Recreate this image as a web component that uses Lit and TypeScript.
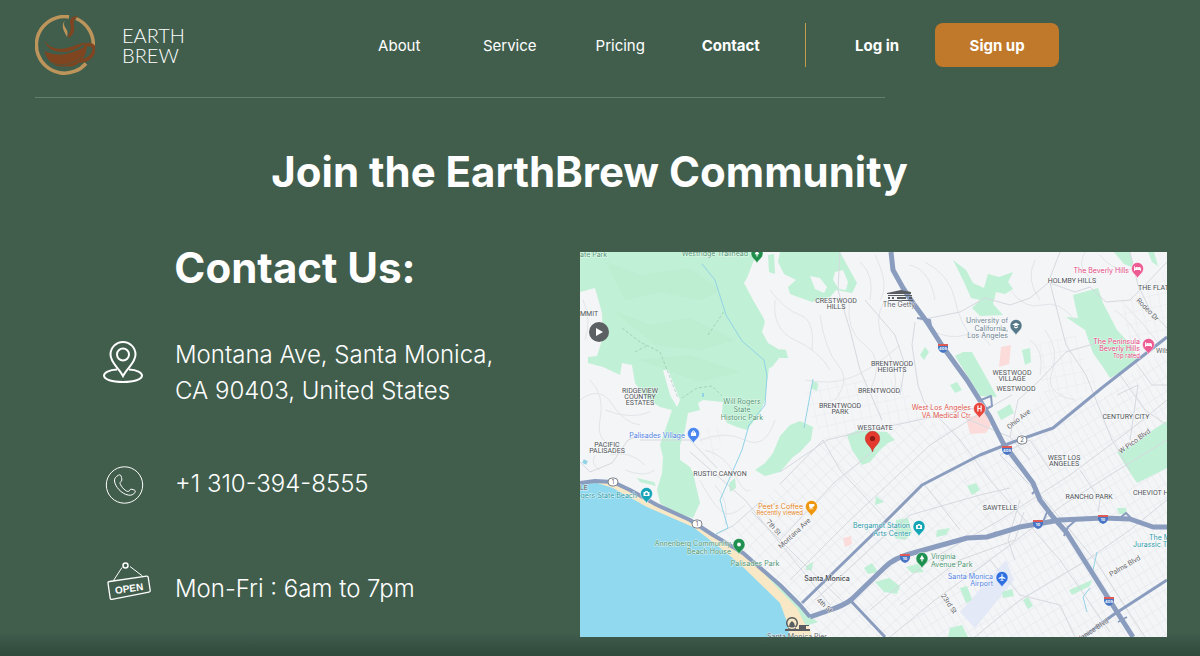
import { LitElement, html, svg, css } from "lit";
import { customElement } from "lit/decorators.js";

type Label = { x: number; y: number; t: string; k: string; r?: number };

const LABELS: Label[] = [
  { x: 580, y: 257, t: "ate Park", k: "park start" },
  { x: 748, y: 256, t: "Westridge Trailhead", k: "park end" },
  { x: 580, y: 316, t: "MMIT", k: "area start" },
  { x: 640, y: 393, t: "RIDGEVIEW", k: "area" },
  { x: 640, y: 399, t: "COUNTRY", k: "area" },
  { x: 640, y: 405, t: "ESTATES", k: "area" },
  { x: 742, y: 404, t: "Will Rogers", k: "park" },
  { x: 742, y: 412, t: "State", k: "park" },
  { x: 742, y: 420, t: "Historic Park", k: "park" },
  { x: 685, y: 438, t: "Palisades Village", k: "shop end" },
  { x: 607, y: 447, t: "PACIFIC", k: "area" },
  { x: 607, y: 453, t: "PALISADES", k: "area" },
  { x: 836, y: 303, t: "CRESTWOOD", k: "area" },
  { x: 836, y: 309, t: "HILLS", k: "area" },
  { x: 899, y: 307, t: "The Getty", k: "poi" },
  { x: 892, y: 366, t: "BRENTWOOD", k: "area" },
  { x: 892, y: 372, t: "HEIGHTS", k: "area" },
  { x: 879, y: 393, t: "BRENTWOOD", k: "area" },
  { x: 840, y: 408, t: "BRENTWOOD", k: "area" },
  { x: 840, y: 414, t: "PARK", k: "area" },
  { x: 875, y: 430, t: "WESTGATE", k: "area" },
  { x: 971, y: 410, t: "West Los Angeles", k: "med end" },
  { x: 971, y: 418, t: "VA Medical Ctr", k: "med end" },
  { x: 1008, y: 323, t: "University of", k: "school end" },
  { x: 1008, y: 331, t: "California,", k: "school end" },
  { x: 1008, y: 338, t: "Los Angeles", k: "school end" },
  { x: 1129, y: 273, t: "The Beverly Hills", k: "hotel end" },
  { x: 1072, y: 283, t: "HOLMBY HILLS", k: "area" },
  { x: 1138, y: 290, t: "THE FLATS", k: "area start" },
  { x: 1140, y: 344, t: "The Peninsula", k: "hotel end" },
  { x: 1140, y: 351, t: "Beverly Hills", k: "hotel end" },
  { x: 1140, y: 358, t: "Top rated", k: "hotel end small" },
  { x: 1156, y: 353, t: "Wilshire", k: "road start" },
  { x: 1012, y: 375, t: "WESTWOOD", k: "area" },
  { x: 1012, y: 381, t: "VILLAGE", k: "area" },
  { x: 1016, y: 391, t: "WESTWOOD", k: "area" },
  { x: 1126, y: 419, t: "CENTURY CITY", k: "area" },
  { x: 1064, y: 460, t: "WEST LOS", k: "area" },
  { x: 1064, y: 466, t: "ANGELES", k: "area" },
  { x: 1089, y: 499, t: "RANCHO PARK", k: "area" },
  { x: 1133, y: 495, t: "CHEVIOT HILLS", k: "area start" },
  { x: 1000, y: 510, t: "SAWTELLE", k: "area" },
  { x: 1149, y: 540, t: "The Museum of", k: "arts start" },
  { x: 1133, y: 547, t: "Jurassic Technology", k: "arts start" },
  { x: 720, y: 476, t: "RUSTIC CANYON", k: "area" },
  { x: 580, y: 490, t: "LE", k: "area start" },
  { x: 637, y: 498, t: "Will Rogers State Beach", k: "arts end" },
  { x: 803, y: 509, t: "Peet's Coffee", k: "food end" },
  { x: 803, y: 515, t: "Recently viewed", k: "food end small" },
  { x: 731, y: 546, t: "Annenberg Community", k: "park end" },
  { x: 731, y: 554, t: "Beach House", k: "park end" },
  { x: 755, y: 566, t: "Palisades Park", k: "park" },
  { x: 910, y: 528, t: "Bergamot Station", k: "arts end" },
  { x: 911, y: 536, t: "Arts Center", k: "arts end" },
  { x: 931, y: 559, t: "Virginia", k: "park start" },
  { x: 931, y: 567, t: "Avenue Park", k: "park start" },
  { x: 827, y: 581, t: "Santa Monica", k: "city" },
  { x: 993, y: 579, t: "Santa Monica", k: "shop end" },
  { x: 993, y: 586, t: "Airport", k: "shop end" },
  { x: 797, y: 639, t: "Santa Monica Pier", k: "poi" },
  { x: 772, y: 529, t: "7th St", k: "road", r: 48 },
  { x: 796, y: 535, t: "Montana Ave", k: "road", r: -43 },
  { x: 823, y: 607, t: "4th St", k: "road", r: 42 },
  { x: 947, y: 605, t: "23rd St", k: "road", r: 56 },
  { x: 1020, y: 421, t: "Ohio Ave", k: "road", r: -38 },
  { x: 1146, y: 311, t: "Rodeo Dr", k: "road", r: 46 },
  { x: 1136, y: 443, t: "W Pico Blvd", k: "road", r: -36 },
  { x: 1126, y: 568, t: "Palms Blvd", k: "road", r: -30 },
  { x: 1094, y: 632, t: "Venice Blvd", k: "road", r: -34 },
];

const GLYPHS: Record<string, unknown> = {
  tree: svg`<path d="M0-3.4 2.4.8H.6V3H-.6V.8h-1.8z"/>`,
  bag: svg`<path d="M-2.6-1h5.2V2.6h-5.2zM-1.4-1c0-2.6 2.8-2.6 2.8 0h-.8c0-1.2-1.2-1.2-1.2 0z"/>`,
  camera: svg`<path fill-rule="evenodd" d="M-3-1.6h1.4l.7-1H.9l.7 1H3v4h-6zM0-.9a1.3 1.3 0 1 0 .01 0z"/>`,
  hospital: svg`<path d="M-2.2-3h1.2v2.4h2V-3h1.2v6H1V.6h-2V3h-1.2z"/>`,
  school: svg`<path d="M0-2.8 3.6-1 0 .8-3.6-1zM-2 .8 0 1.8 2 .8v1.3L0 3-2 2.1z"/>`,
  bed: svg`<path d="M-3.4-2.2h.9v2.2h.5v-1.4h2.2v1.4h.5v-1.6h1.1q1.6 0 1.6 1.6v2.4h-.8v-.9h-5.2v.9h-.8z"/>`,
  cup: svg`<path d="M-2.4-2.4h4q1.8 0 1.4 1.4-.4 1.2-1.6 1.2Q1.2 1.4 0 1.4h-.8q-1.6 0-1.6-1.6zM-2.6 2h4.4v.7h-4.4z"/>`,
  dot: svg`<circle r="1.9"/>`,
  plane: svg`<path d="M-.5-3.4h1V-1L3.4.6v.8L.5.7v1.5l.9.6v.7L0 3.1l-1.4.4v-.7l.9-.6V.7l-2.9.7V.6L-.5-1z"/>`,
};

const PINS = [
  { x: 757, y: 254, c: "#1e8e4a", g: "tree" },
  { x: 693.5, y: 434, c: "#4a86f0", g: "bag" },
  { x: 646.5, y: 494, c: "#16a5b8", g: "camera" },
  { x: 979.5, y: 409, c: "#e8453c", g: "hospital" },
  { x: 1016, y: 326, c: "#56798a", g: "school" },
  { x: 1137.5, y: 269, c: "#ec5c92", g: "bed" },
  { x: 1148.5, y: 345, c: "#ec5c92", g: "bed" },
  { x: 811.5, y: 507, c: "#ee960d", g: "cup" },
  { x: 739, y: 545, c: "#1e9150", g: "dot" },
  { x: 919, y: 527, c: "#12a5b5", g: "camera" },
  { x: 922, y: 559, c: "#1e9150", g: "tree" },
  { x: 1002, y: 578, c: "#2f6fe0", g: "plane" },
];

const PARKS = [
  "580,252 757,252 754,260 747,278 744,283 753,300 763,317 765,322 762,332 768,343 780,350 788,358 780,357 772,367 769,368 767,383 765,400 760,413 747,430 737,427 727,423 722,413 723,402 703,400 698,403 700,410 688,413 685,430 680,445 680,460 690,467 693,473 700,503 693,518 673,512 660,503 657,490 662,473 663,457 660,445 672,410 660,407 645,397 635,383 632,365 622,363 620,375 603,367 588,363 588,357 597,356 603,337 602,313 595,288 580,292",
  "780,252 840,252 847,265 857,283 852,293 836,290 830,297 812,302 790,294 788,287 796,280 784,274 778,262",
  "768,255 774,254 775,274 769,272",
  "755,470 765,463 773,453 780,436 790,425 800,421 813,427 811,440 800,452 793,457 780,472 765,476",
  "847,435 858,430 887,432 895,440 888,443 880,450 870,462 862,465 852,450",
  "955,356 963,352 972,352 985,375 997,397 980,396 970,380",
  "1073,295 1098,288 1103,303 1117,330 1133,347 1137,360 1130,367 1110,378 1103,367 1093,353 1085,330 1066,317 1078,318",
  "1117,452 1133,445 1150,432 1167,421 1167,468 1137,483 1127,468",
  "953,260 966,270 973,283 984,288 988,274 999,277 1013,272 1008,282 1013,289 1005,294 996,292 993,304 1003,315 980,316 972,308 980,300 971,298 964,282",
  "1114,252 1130,252 1134,268 1124,264",
  "1148,252 1154,252 1158,266 1152,262",
  "1022,350 1030,348 1031,362 1025,365",
  "997,412 1010,404 1014,413 1001,420",
  "950,385 957,382 962,390 955,393",
  "864,568 872,563 878,572 868,574",
  "896,520 908,518 912,533 905,540 895,538",
  "876,496 884,502 875,505",
  "967,486 976,483 980,490 972,495",
  "937,530 950,528 946,535 936,537",
  "906,567 918,564 924,572 912,573",
  "960,588 967,586 972,600 966,603",
  "950,628 962,625 968,637 948,637",
  "1069,590 1092,580 1090,586 1072,595",
  "1023,600 1028,597 1033,606 1028,609",
  "637,478 654,482 656,486 640,482",
  "729,483 735,478 736,488 730,492",
  "1117,508 1126,508 1127,514 1119,514",
  "806,566 813,562 812,570 806,570",
  "875,582 889,578 900,586 897,594 884,592",
  "1002,592 1012,589 1014,596 1003,598",
  "812,381 818,383 817,391 812,389",
  "780,349 786,350 788,358 780,358",
  "920,355 925,347 929,352 924,360",
  "742,553 752,560 777,585 773,587 748,563",
];

const SECONDARY = [
  "M780,472 827,440 860,432 900,424 975,408",
  "M780,484 823,440 840,470 905,540",
  "M640,440 690,440 717,468",
  "M690,452 745,500 830,605",
  "M762,500 733,526 716,534",
  "M752,512 800,560 845,604",
  "M790,580 850,520 930,445 985,410 1012,395",
  "M815,600 880,540 910,515 980,495 1010,488",
  "M780,540 835,482 872,452",
  "M915,322 912,345 918,385 924,402 960,440 990,480 1060,560 1110,632",
  "M920,320 960,312 985,298 1010,305 1030,298 1048,283 1060,252",
  "M1050,283 1066,345 1086,375 1100,410 1112,440 1130,470",
  "M1050,283 1075,292 1090,287 1106,302 1130,300 1145,285 1167,262",
  "M1130,252 1138,285 1150,310 1167,328",
  "M965,418 1010,437 1030,460",
  "M1010,437 1018,400 1040,380 1066,352 1100,342",
  "M1000,455 1045,500 1095,560 1145,637",
  "M1167,400 1130,430 1070,475 1000,520 930,560 870,610",
  "M1167,440 1110,475 1063,505 990,560 935,600 890,637",
  "M900,605 960,560 1015,540 1024,512",
  "M1080,470 1100,500 1098,512",
  "M970,575 990,560 1020,595 1060,605 1075,637",
  "M1020,500 1008,540 1015,560",
  "M1120,375 1145,410 1167,425",
  "M1135,362 1152,385 1167,385",
  "M1117,395 1138,385 1130,440",
  "M580,462 590,472 612,463 628,440 640,435",
  "M840,252 838,290 850,330 860,370 882,420",
  "M865,300 895,335 905,365 900,395",
  "M1000,455 1030,440 1050,470",
  "M925,485 960,530",
  "M1167,500 1130,530 1087,560 1020,600 975,637",
];

const LANES = [
  "M580,400 Q600,385 612,404 T640,425 M590,380 Q605,395 600,420 T620,445",
  "M585,340 Q592,320 583,300 M605,410 Q630,420 650,412",
  "M770,290 Q785,310 800,315 T812,350 M775,300 Q772,330 795,340 T830,370",
  "M850,300 Q845,330 865,345 T870,390 M885,300 Q872,320 885,345 T895,390",
  "M820,315 Q825,350 838,365 T835,400 M805,380 Q830,385 850,378 T900,345",
  "M860,262 Q875,275 870,300 M875,255 Q890,285 880,300 M910,265 Q930,270 935,300",
  "M925,262 Q950,275 955,300 T975,340 M930,330 Q950,340 965,335 T990,345",
  "M700,440 Q725,430 745,440 T775,420 M705,450 Q725,455 735,475 T750,490",
  "M700,480 Q710,500 720,510 T745,505 M715,485 Q730,500 725,525",
  "M1010,290 Q1025,310 1042,305 T1075,320 M1035,260 Q1025,280 1040,300",
  "M1030,340 Q1045,350 1040,375 M1045,330 Q1060,350 1052,372 T1075,400",
  "M1085,252 Q1075,270 1095,280 M1100,255 Q1115,275 1140,268 M1150,290 Q1160,280 1167,290",
  "M1115,310 Q1130,320 1140,340 M1125,305 Q1145,325 1160,345",
  "M610,455 Q630,450 645,465 M595,455 Q590,465 600,470 M625,470 Q645,478 655,470",
];

const INTERSTATES = [
  "M891,252 893,270 903,288 913,303 927,322 943,347 967,380 979,399 990,417 1003,443 1033,483 1040,500 1053,517 1067,533 1103,590 1133,637",
  "M810,617 830,610 Q845,605 852,599 L884,568 Q893,558 913,553 L967,538 987,537 1020,527 1060,520 1103,518 1130,519 1153,527 1167,527",
];

const HIGHWAYS = [
  "M802,603 870,537 922,485 980,455 1013,442 1053,428 1103,387 1167,337",
  "M850,600 885,637",
  "M1083,637 1113,615 1167,580",
];

const SHIELDS: [number, number, string][] = [
  [943, 348, "405"], [1007, 450, "405"], [905, 558, "10"],
  [1038, 524, "10"], [1103, 519, "10"], [1109, 601, "405"],
];

const ROUTES: [number, number, string][] = [
  [613, 482, "1"], [697, 524, "1"], [1022, 440, "2"],
];

@customElement("brew-map")
export class BrewMap extends LitElement {
  static styles = css`
    :host { display: block; position: relative; }
    .map { display: block; width: 100%; height: auto; font-family: Inter, "Liberation Sans", sans-serif; }
    text { font-size: 7px; text-anchor: middle; fill: #5f6368; paint-order: stroke; stroke: #ffffffb3; stroke-width: 1px; }
    .start { text-anchor: start; }
    .end { text-anchor: end; }
    .area { font-family: Roboto, sans-serif; fill: #4d5156; }
    .city { font-weight: 500; fill: #44484d; }
    .park { fill: #4c9670; }
    .shop { fill: #4f82e6; }
    .med { fill: #e0574f; }
    .school { fill: #6b8290; }
    .hotel { fill: #e3487f; }
    .arts { fill: #2a9aa9; }
    .food { fill: #e58422; }
    .small { font-size: 6px; }
    .road { font-family: Roboto, sans-serif; }
    .shield { font-size: 4px; font-weight: 700; fill: #fff; stroke: none; }
    .route { font-size: 6px; stroke: none; }
    .play {
      position: absolute; left: 9px; top: 70px; width: 20px; height: 20px; padding: 0; border: 0;
      border-radius: 50%; background: #5c6063; display: grid; place-items: center; cursor: pointer;
    }
  `;

  render() {
    return html`
      <svg class="map" viewBox="580 252 587 385" role="img" aria-label="Map of Santa Monica and West Los Angeles">
        <defs>
          <pattern id="grid" width="8" height="14" patternUnits="userSpaceOnUse" patternTransform="rotate(-43)">
            <path d="M0 0H8M0 0V14" stroke="#e2e5ea" stroke-width="1" fill="none" />
          </pattern>
          <pattern id="east" width="7" height="13" patternUnits="userSpaceOnUse" patternTransform="rotate(-31)">
            <path d="M0 0H7M0 0V13" stroke="#e4e6eb" stroke-width="1" fill="none" />
          </pattern>
          <pattern id="north" width="9" height="12" patternUnits="userSpaceOnUse" patternTransform="rotate(-12)">
            <path d="M0 0H9M0 0V12" stroke="#e7e9ed" stroke-width="1" fill="none" />
          </pattern>
        </defs>
        <rect x="580" y="252" width="587" height="385" fill="#f4f5f7" />
        <path fill="url(#grid)" d="M823 440 925 420 985 500 1000 540 890 637H800L745 552 720 535 765 498z" />
        <path fill="url(#east)" d="M925 420 1003 443 1045 390 1100 400 1167 345V637H890L1000 540z" />
        <path fill="url(#north)" d="M800 385 900 378 925 420 823 440zM1035 345 1075 335 1100 390 1045 400zM690 430 727 425 715 460zM1120 300 1167 270V340L1130 345z" />
        <path fill="#e4e9f7" d="M960 612 1006 560 1014 580 975 628z" />
        <path fill="#fbdcdb" d="M966 418 985 413 991 425 986 433 970 434zM1001 347 1011 345 1009 364 999 367zM843 538 851 536 852 544 845 547z" />
        <g fill="#c0f0d5">${PARKS.map((p) => svg`<polygon points=${p} />`)}</g>
        <g fill="#b3e8ca" opacity=".25">
          <path d="M606 262 640 275 690 268 720 290 700 300 660 292 625 300zM612 310 650 325 690 318 735 340 700 350 655 345zM640 360 690 355 740 372 700 382z" />
        </g>
        <path fill="#f4f5f7" d="M810 276 820 278 827 287 824 293 815 289zM835 272 843 270 848 282 846 290 839 289 833 280zM663 370 668 370 680 400 677 407 670 395z" />
        <g fill="none" stroke="#e2e5e9" stroke-width="1">${LANES.map((d) => svg`<path d=${d} />`)}</g>
        <g fill="none" stroke="#8fbfae" stroke-width="1" stroke-dasharray="3 2" opacity=".6">
          <path d="M622 328 640 342 660 352 678 398M635 352 648 345M682 398 697 388 712 386 722 396M708 335 725 310" />
        </g>
        <g fill="none" stroke="#d6d9df" stroke-width="1">${SECONDARY.map((d) => svg`<path d=${d} />`)}</g>
        <g fill="none" stroke="#92d3e6" stroke-width="1">
          <path d="M702 264 715 280 726 315 742 341 764 360 767 376 765 405 749 425 742 450 720 500 728 528 716 534M813 379 804 428M1090 588 1083 597 1087 612M1097 552 1093 570" />
          <path d="M583 461 587 463M702 395 704 395" stroke-width="4" />
        </g>
        <path fill="#f8e8c6" d="M590 483 613 482 647 498 695 521 735 548 765 572 796 602 807 618 812 637H787L780 608 743 571 723 554 693 531 640 507z" />
        <path fill="#c0f0d5" d="M745 554 780 585 805 613 818 622 806 626 797 608 773 583z" />
        <path fill="#90d9ee" d="M580 484 597 483 613 488 647 507 693 527 723 550 743 567 780 603 787 622 790 637H580z" />
        <g fill="none" stroke="#8b9dbf" stroke-linejoin="round">
          <path stroke-width="4" d="M580 483 595 481 613 482 630 490 657 505 690 520 713 535 743 553 780 585 800 605 810 617" />
          <g stroke-width="3">${HIGHWAYS.map((d) => svg`<path d=${d} />`)}</g>
          <g stroke-width="5">${INTERSTATES.map((d) => svg`<path d=${d} />`)}</g>
          <path stroke-width="2" d="M917 318 930 320 931 326M981 400 991 396 992 406 986 409M1036 490 1032 494M1043 522 1047 512M1064 536 1068 527 1076 520M1121 517 1126 513 1133 520M988 538 996 532M1118 622 1127 617" />
        </g>
        ${SHIELDS.map(([x, y, n]) => svg`
          <g transform="translate(${x} ${y})">
            <path d="M-5-4H5V0Q4 4 0 5-4 4-5 0z" fill="#4876c4" /><path d="M-5-4H5V-2H-5z" fill="#dc5b57" />
            <text class="shield" y="2">${n}</text>
          </g>`)}
        ${ROUTES.map(([x, y, n]) => svg`
          <rect x=${x - 5} y=${y - 4} width="10" height="8" rx="4" fill="#fff" stroke="#7d8490" stroke-width="1" />
          <text class="route" x=${x} y=${y + 2}>${n}</text>`)}
        <g fill="#595d61">
          <path d="M887 293 901 290 911 292V294H887zM888 295H912V296H888zM888 297H890V299H888zM892 297H894V299H892zM897 297H906V299H897zM909 297H912V299H909zM888 300H913V301H888z" />
          <path fill-rule="evenodd" d="M792 617a6 6 0 1 0 .01 0zm0 1.5a4.5 4.5 0 1 1-.01 0zM790 623l2-2 2 2 2 6h-8zM785 629H810V631H785zM799 625H809V626H806V629H799z" />
        </g>
        ${LABELS.map((l) => svg`<text class=${l.k} x=${l.x} y=${l.y} transform=${l.r ? `rotate(${l.r} ${l.x} ${l.y})` : ""}>${l.t}</text>`)}
        ${PINS.map((p) => svg`
          <g transform="translate(${p.x} ${p.y})">
            <path d="M0 9.5C-.8 6-6 4.4-6-.6A6 6 0 0 1 6-.6C6 4.4.8 6 0 9.5z" fill=${p.c} stroke="#fff" stroke-width=".5" />
            <g fill="#fff" transform="translate(0 -.5)">${GLYPHS[p.g]}</g>
          </g>`)}
        <path d="M872.5 452C871.5 446 865.3 444.5 865.3 438.5A7.2 7.2 0 0 1 879.7 438.5C879.7 444.5 873.5 446 872.5 452z" fill="#e3392f" stroke="#b8281f" stroke-width=".5" />
        <circle cx="872.5" cy="438.5" r="2.6" fill="#8c1a14" />
      </svg>
      <button class="play" type="button" aria-label="Play">
        <svg width="8" height="8" viewBox="0 0 8 8"><path d="M1 0 8 4 1 8z" fill="#fff" /></svg>
      </button>
    `;
  }
}

@customElement("app-root")
export class AppRoot extends LitElement {
  static styles = css`
    :host {
      display: block; min-height: 100vh; box-sizing: border-box; color: #fff;
      background: linear-gradient(to top, #2f493b 0, #354f41 8px, #415e4d 24px) #415e4d;
      font-family: Inter, "Open Sans", sans-serif;
    }
    a { color: inherit; text-decoration: none; }
    .header { display: flex; align-items: center; padding: 15px 33px 22px 35px; }
    .brand { display: flex; align-items: center; gap: 27px; width: 309px; }
    .name { font: 300 20px/20px Lato, sans-serif; }
    .logo, .icon { display: block; flex: none; }
    .nav { display: grid; grid-template-columns: repeat(4, 1fr); width: 442px; font-size: 15px; text-align: center; }
    .strong { font-weight: 700; }
    .actions {
      display: flex; align-items: center; gap: 36px; margin-left: 19px; padding-left: 49px; height: 44px;
      border-left: 1px solid #c49a4c; font-size: 15px; font-weight: 700;
    }
    .signup {
      width: 124px; height: 44px; border: 0; border-radius: 8px; background: #c0782b; color: inherit;
      font: inherit; cursor: pointer;
    }
    .rule { width: 850px; max-width: 80%; height: 1px; margin: 0 0 0 35px; border: 0; background: #62806d; }
    h1, h2 { margin: 0; font-weight: 700; font-size: 42px; line-height: 56px; text-align: center; }
    h1 { padding: 46px 21px 52px 0; }
    h2 { padding-left: 10px; }
    .columns { display: grid; grid-template-columns: 580fr 587fr; padding: 0 33px 19px 0; align-items: start; }
    .contact { margin-top: -12px; }
    .list { display: grid; gap: 51px; margin: 0; padding: 41px 0 0 103px; list-style: none; }
    .item { display: flex; gap: 24px; align-items: center; font-size: 24px; font-weight: 300; line-height: 36px; }
    .top { align-items: flex-start; }
    .bottom { align-items: flex-end; }
    .open { font: 700 10px "Liberation Sans", sans-serif; }
  `;

  render() {
    return html`
      <header class="header">
        <a class="brand" href="#home">
          <svg class="logo" width="60" height="60" viewBox="0 0 60 60" aria-hidden="true">
            <path d="M41 3.5A28.3 28.3 0 0 1 58.3 31M51 48.5A28.3 28.3 0 1 1 34 1.9" fill="none" stroke="#bd955b" stroke-width="3.5" />
            <path d="M43 1C38 .5 34.5 3.5 35 8c.5 4 1.5 6.5-.5 10-1 1.8-1.8 3.2-1.3 5.5 4.5-3 7-7 5.8-12C38 7.5 39 4 43 1z" fill="#7e4520" />
            <path d="M30 5.5c-2.5 4 .2 6.5 1.8 9.5 1 2.2.8 4.500.2 7C30.5 18.5 28 15.5 27.8 12 27.7 9 28.5 7.2 30 5.5z" fill="#bd955b" />
            <path d="M9 25c5 8 13 9.5 20 8.5 8-1 14-5 22-6-6 5-14 9-22 9.5C20 37.5 12 34 9 25z" fill="#7e4520" />
            <path d="M9.5 36C18 41 34 42 52 30c-.5 11-6 19-15 21.5H24C16 49 11 43.5 9.5 36z" fill="#7e4520" />
            <path d="M49 31c8-4 12 1 9 7-2 5-8 8-13 8" fill="none" stroke="#7e4520" stroke-width="3.5" />
            <path d="M14 46c8 6 24 5 33-5" fill="none" stroke="#56543a" stroke-width="1" />
          </svg>
          <span class="name">EARTH<br />BREW</span>
        </a>
        <nav class="nav">
          <a href="#about">About</a>
          <a href="#service">Service</a>
          <a href="#pricing">Pricing</a>
          <a class="strong" href="#contact">Contact</a>
        </nav>
        <div class="actions">
          <a href="#login">Log in</a>
          <button class="signup" type="button">Sign up</button>
        </div>
      </header>
      <hr class="rule" />
      <main>
        <h1>Join the EarthBrew Community</h1>
        <div class="columns">
          <section class="contact">
            <h2>Contact Us:</h2>
            <ul class="list">
              <li class="item top">
                <svg class="icon" width="48" height="48" viewBox="0 0 48 48" fill="none" stroke="#fff" stroke-width="2" aria-hidden="true">
                  <path d="M20 39C16 31 7.5 26 7.5 17.5a12.5 12.5 0 0 1 25 0C32.5 26 24 31 20 39z" />
                  <circle cx="20" cy="17.5" r="6" />
                  <path d="M14 32.6C6 33 1 35.5 1 38.5 1 42.5 9 45 20 45s19-2.5 19-6.5c0-3-5-5.5-13-5.9" />
                </svg>
                <span>Montana Ave, Santa Monica,<br />CA 90403, United States</span>
              </li>
              <li class="item">
                <svg class="icon" width="48" height="48" viewBox="0 0 48 48" fill="none" stroke="#fff" stroke-width="1" aria-hidden="true">
                  <circle cx="21.5" cy="25" r="18.2" />
                  <path d="M15.5 15.2c1.7-1.1 2.5.2 3 2.3.5 2 .6 3.2-.8 4.3-1.3 1-.6 2.3.7 4.3 1.6 2.4 3.3 4 5.3 5 1.6.8 2.4.2 3-1 .7-1.3 1.7-1 3.4-.5 2.2.6 2.7 1.3 1.7 3-1.2 2-3.6 3-6.5 2.5C18.5 34 12 26.5 11.5 21c-.3-2.6 1.5-4.5 4-5.8z" />
                </svg>
                <a href="tel:+13103948555">+1 310-394-8555</a>
              </li>
              <li class="item bottom">
                <svg class="icon" width="48" height="48" viewBox="0 0 48 48" fill="none" stroke="#fff" stroke-width="1" aria-hidden="true">
                  <circle cx="22.5" cy="6.5" r="2.5" stroke-width="1.5" />
                  <path d="M19 8.5 10.5 21.500M27 7.5 39.5 17" />
                  <path d="M6.5 22.5 43.5 17.2q1.5-.2 1.7 1.2l2 13q.2 1.5-1.3 1.8L9 40.3q-1.6.3-1.8-1.2L5 24.2q-.2-1.5 1.5-1.7z" stroke-width="1.3" />
                  <text class="open" transform="rotate(-8 26 29)" x="26" y="33" text-anchor="middle" fill="#fff" stroke="none">OPEN</text>
                </svg>
                <span>Mon-Fri : 6am to 7pm</span>
              </li>
            </ul>
          </section>
          <brew-map></brew-map>
        </div>
      </main>
    `;
  }
}
